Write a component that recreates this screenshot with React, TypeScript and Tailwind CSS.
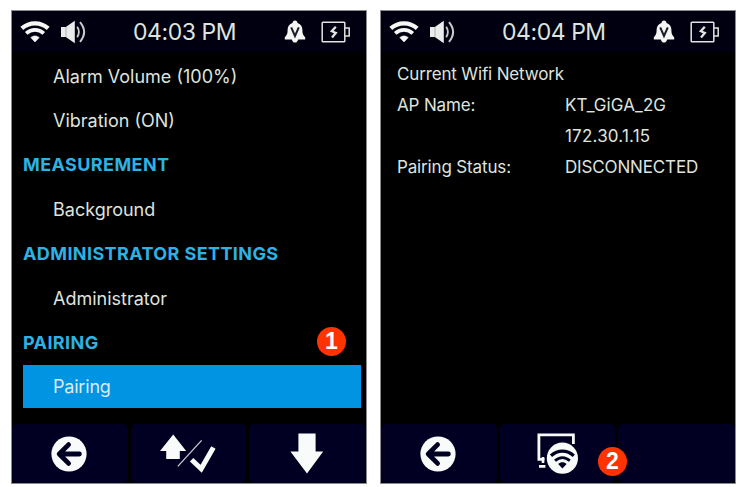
import type { ReactNode } from "react";

function WifiIcon() {
  return (
    <svg className="ml-[8px] h-[24px] w-[30px] shrink-0" viewBox="0 0 30 24" fill="none" stroke="#f4f7f4">
      <path d="M1.8 8.4C9.3 1.6 20.7 1.6 28.2 8.4" strokeWidth="4.2" />
      <path d="M6.2 13.4C11.4 8.8 18.6 8.8 23.8 13.4" strokeWidth="3.8" />
      <path d="M10.8 17.6L15 22L19.2 17.6C16.8 15.4 13.2 15.4 10.8 17.6Z" fill="#f4f7f4" strokeWidth="0.6" />
    </svg>
  );
}

function SpeakerIcon() {
  return (
    <svg className="ml-[11px] h-[24px] w-[26px] shrink-0" viewBox="0 0 26 24" fill="none" stroke="#c9cdca">
      <path d="M0 7H4.8L13.8 0.8V23.2L4.8 17H0Z" fill="#e9ecea" stroke="none" />
      <path d="M5 7.2V16.8" stroke="#9a9da4" strokeWidth="0.8" />
      <path d="M16.2 6.8Q19.6 12 16.2 17.2" strokeWidth="1.8" />
      <path d="M19 2.2Q27.2 12 19 21.8" strokeWidth="2" />
    </svg>
  );
}

function BellIcon() {
  return (
    <svg className="h-[24px] w-[22px] shrink-0" viewBox="0 0 22 24">
      <path
        d="M11 0.5C12.6 0.5 13.4 1.5 13.5 3C16.6 4 18.4 6.5 18.4 9.8C18.4 14 19.2 15.2 21.2 17.2V19.4H14.2C13.6 21.4 12.6 22.6 11 22.6C9.4 22.6 8.4 21.4 7.8 19.4H0.8V17.2C2.8 15.2 3.6 14 3.6 9.8C3.6 6.5 5.4 4 8.5 3C8.6 1.5 9.4 0.5 11 0.5Z"
        fill="#f4f7f4"
      />
      <path d="M7.2 7.4L11 16L14.8 7.4" fill="none" stroke="#1c1c26" strokeWidth="2" />
    </svg>
  );
}

function BatteryIcon() {
  return (
    <svg className="h-[24px] w-[30px] shrink-0" viewBox="0 0 30 24" fill="none" stroke="#e1e4e2">
      <rect x="1.2" y="2.3" width="22.6" height="19.4" rx="0.8" strokeWidth="1.5" />
      <path d="M23.8 8H28.2V16H23.8" strokeWidth="1.5" />
      <path d="M14.8 6.8L10.8 11.2L14.8 13L11 17.4" strokeWidth="2.3" />
    </svg>
  );
}

function BackIcon() {
  return (
    <svg className="mr-[3px] h-[36px] w-[36px]" viewBox="0 0 36 36">
      <circle cx="18" cy="18" r="17.6" fill="#f8fbf9" />
      <path d="M17.6 8.6L8.2 18L17.6 27.4M8.8 18H28.4" fill="none" stroke="#020022" strokeWidth="4.8" strokeLinecap="round" strokeLinejoin="round" />
    </svg>
  );
}

function UpCheckIcon() {
  return (
    <svg className="mr-[2px] h-[40px] w-[56px]" viewBox="0 0 56 40">
      <path d="M13.2 0.4L26.2 17H19.8V25H6.2V17H0Z" fill="#f8fbf9" />
      <path d="M17.8 32.4L41.6 6.4" fill="none" stroke="#c9cbd2" strokeWidth="1.3" />
      <path d="M31.6 25.8L41.2 34.8L53.4 13.4" fill="none" stroke="#f8fbf9" strokeWidth="5" />
    </svg>
  );
}

function DownIcon() {
  return (
    <svg className="mr-[2px] h-[42px] w-[34px]" viewBox="0 0 34 42">
      <path d="M8.4 0.4H25.6V18.4H33.2L17 40.4L0.4 18.4H8.4Z" fill="#f8fbf9" />
    </svg>
  );
}

function PairIcon() {
  return (
    <svg className="h-[42px] w-[42px]" viewBox="0 0 42 42" fill="none" stroke="#f8fbf9">
      <path d="M7.4 26.4H1.9V1.9H36.4V11" strokeWidth="2.8" />
      <path d="M2 33.4H8.4M6 24V30" strokeWidth="2.6" />
      <circle cx="25.4" cy="25.2" r="15.6" fill="#f8fbf9" stroke="none" />
      <g stroke="#020022">
        <path d="M14 22.8C20.8 16.6 30 16.6 36.8 22.8" strokeWidth="3.2" />
        <path d="M18 27.8C22.6 23.6 28.2 23.6 32.8 27.8" strokeWidth="2.8" />
        <path d="M21.2 31L25.4 35.4L29.6 31C27.2 28.8 23.6 28.8 21.2 31Z" fill="#020022" stroke="none" />
      </g>
    </svg>
  );
}

function StatusBar({ time }: { time: string }) {
  return (
    <header className="flex h-[41px] shrink-0 items-center bg-[#010010]">
      <WifiIcon />
      <SpeakerIcon />
      <span className="ml-[46px] w-[103px] whitespace-nowrap pt-px text-[23px] leading-none tracking-[-0.45px] text-[#dfe3df]">{time}</span>
      <span className="ml-[48px] flex gap-[15px]">
        <BellIcon />
        <BatteryIcon />
      </span>
    </header>
  );
}

function FooterKeys({ keys }: { keys: ReactNode[] }) {
  return (
    <footer className="grid h-[59px] shrink-0 grid-cols-[116px_115px_117px] gap-[3px]">
      {keys.map((key, index) => (
        <div key={index} className="flex items-center justify-center rounded-[5px] bg-[#020022]">
          {key}
        </div>
      ))}
    </footer>
  );
}

function Device({ time, keys, children }: { time: string; keys: ReactNode[]; children: ReactNode }) {
  return (
    <section className="flex h-[474px] w-[356px] flex-col overflow-hidden border border-[#8b8b8f] bg-black">
      <StatusBar time={time} />
      <main className="min-h-0 flex-1">{children}</main>
      <FooterKeys keys={keys} />
    </section>
  );
}

function Item({ label }: { label: string }) {
  return <div className="flex h-[44.4px] items-center pl-[41px] text-[18px] text-[#dfe3df]">{label}</div>;
}

function Heading({ label }: { label: string }) {
  return <h2 className="flex h-[44.4px] items-center pl-[11px] text-[18px] font-bold tracking-[0.4px] text-[#2db2e3]">{label}</h2>;
}

function Badge({ value, place }: { value: string; place: string }) {
  return (
    <span className={`absolute flex h-[29px] w-[29px] items-center justify-center rounded-full bg-[#ff3300] font-['Liberation_Sans',sans-serif] text-[23px] font-bold leading-none text-white ${place}`}>
      {value}
    </span>
  );
}

export default function App() {
  return (
    <div className="relative flex h-[487px] w-[747px] gap-[13px] overflow-hidden bg-white pl-[11px] pt-[10px] font-['Inter',sans-serif]">
      <Device time="04:03 PM" keys={[<BackIcon />, <UpCheckIcon />, <DownIcon />]}>
        <div className="pt-[2px]">
          <Item label="Alarm Volume (100%)" />
          <Item label="Vibration (ON)" />
          <Heading label="MEASUREMENT" />
          <Item label="Background" />
          <Heading label="ADMINISTRATOR SETTINGS" />
          <Item label="Administrator" />
          <Heading label="PAIRING" />
          <div className="ml-[11px] flex h-[43px] w-[338px] items-center bg-[#0094e3] pl-[30px] text-[18px] tracking-[-0.2px] text-[#dcebf0]">Pairing</div>
        </div>
      </Device>
      <Device time="04:04 PM" keys={[<BackIcon />, <PairIcon />, null]}>
        <div className="pl-[16px] pt-[7px] text-[17px] leading-[31px] tracking-[-0.15px] text-[#dfe3df]">
          <p>Current Wifi Network</p>
          <dl className="grid grid-cols-[168px_1fr]">
            <dt>AP Name:</dt>
            <dd className="tracking-[0.1px]">KT_GiGA_2G</dd>
            <dd className="col-start-2 tracking-[0.2px]">172.30.1.15</dd>
            <dt>Pairing Status:</dt>
            <dd>DISCONNECTED</dd>
          </dl>
        </div>
      </Device>
      <Badge value="1" place="left-[317px] top-[327px]" />
      <Badge value="2" place="left-[598px] top-[447px]" />
    </div>
  );
}
